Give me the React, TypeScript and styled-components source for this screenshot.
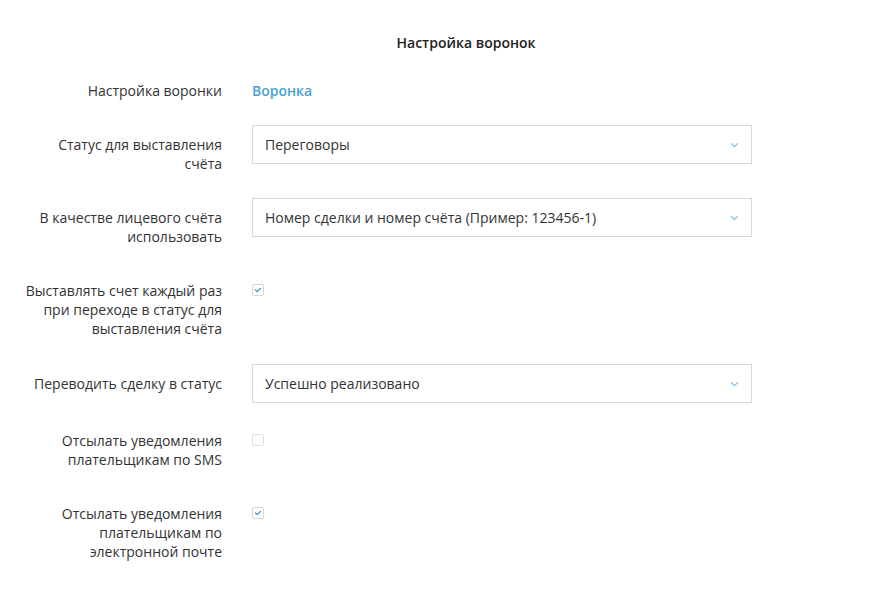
import React from "react";
import styled, { createGlobalStyle } from "styled-components";

const Global = createGlobalStyle`
  html, body { margin: 0; padding: 0; background: #fff; }
  body { font-family: "Open Sans", "Noto Sans", sans-serif; color: #333; }
  * { box-sizing: border-box; }
`;

const Page = styled.div`
  width: 880px;
  height: 598px;
  background: #fff;
  padding-top: 33px;
`;

const Title = styled.h1`
  margin: 0 0 18px;
  padding-left: 52px;
  text-align: center;
  font-size: 14px;
  font-weight: 600;
  line-height: 20px;
  color: #222;
`;

const Form = styled.div`
  display: flex;
  flex-direction: column;
  padding-left: 22px;
`;

const Row = styled.div<{ $gap?: number }>`
  display: grid;
  grid-template-columns: 200px 500px;
  column-gap: 30px;
  align-items: start;
  margin-bottom: ${(p) => p.$gap ?? 15}px;
`;

const Label = styled.div`
  text-align: right;
  font-size: 14px;
  line-height: 19px;
  padding: 10px 0;
  color: #333;
`;

const LinkText = styled.a`
  font-size: 14px;
  font-weight: 600;
  line-height: 19px;
  padding: 10px 0;
  color: #4a9fd6;
  text-decoration: none;
  justify-self: start;
`;

const Select = styled.div`
  height: 39px;
  border: 1px solid #d9d9d9;
  background: #fff;
  display: flex;
  align-items: center;
  justify-content: space-between;
  padding: 0 12px 0 12px;
  font-size: 14px;
  color: #333;
`;

const Chevron = () => (
  <svg width="9" height="6" viewBox="0 0 9 6">
    <path d="M1 1.2 L4.5 4.5 L8 1.2" fill="none" stroke="#8ec8e8" strokeWidth="1.3" />
  </svg>
);

const CheckCell = styled.div`
  padding-top: 13px;
  display: flex;
`;

const Box = styled.span<{ $checked: boolean }>`
  width: 12px;
  height: 12px;
  border: 1px solid ${(p) => (p.$checked ? "#d6d6d6" : "#dedede")};
  border-radius: 2px;
  background: #fff;
  display: flex;
  align-items: center;
  justify-content: center;
`;

const Checkbox = ({ checked }: { checked: boolean }) => (
  <Box $checked={checked}>
    {checked && (
      <svg width="8" height="6" viewBox="0 0 8 6">
        <path d="M1 2.6 L3.2 4.6 L7 1" fill="none" stroke="#4a9fd6" strokeWidth="1.4" />
      </svg>
    )}
  </Box>
);

export default function App() {
  return (
    <Page>
      <Global />
      <Title>Настройка воронок</Title>
      <Form>
        <Row>
          <Label>Настройка воронки</Label>
          <LinkText href="#">Воронка</LinkText>
        </Row>
        <Row>
          <Label>
            Статус для выставления
            <br />
            счёта
          </Label>
          <Select>
            <span>Переговоры</span>
            <Chevron />
          </Select>
        </Row>
        <Row>
          <Label>
            В качестве лицевого счёта
            <br />
            использовать
          </Label>
          <Select>
            <span>Номер сделки и номер счёта (Пример: 123456-1)</span>
            <Chevron />
          </Select>
        </Row>
        <Row $gap={16}>
          <Label>
            Выставлять счет каждый раз
            <br />
            при переходе в статус для
            <br />
            выставления счёта
          </Label>
          <CheckCell>
            <Checkbox checked />
          </CheckCell>
        </Row>
        <Row $gap={18}>
          <Label>Переводить сделку в статус</Label>
          <Select>
            <span>Успешно реализовано</span>
            <Chevron />
          </Select>
        </Row>
        <Row>
          <Label>
            Отсылать уведомления
            <br />
            плательщикам по SMS
          </Label>
          <CheckCell>
            <Checkbox checked={false} />
          </CheckCell>
        </Row>
        <Row>
          <Label>
            Отсылать уведомления
            <br />
            плательщикам по
            <br />
            электронной почте
          </Label>
          <CheckCell>
            <Checkbox checked />
          </CheckCell>
        </Row>
      </Form>
    </Page>
  );
}
